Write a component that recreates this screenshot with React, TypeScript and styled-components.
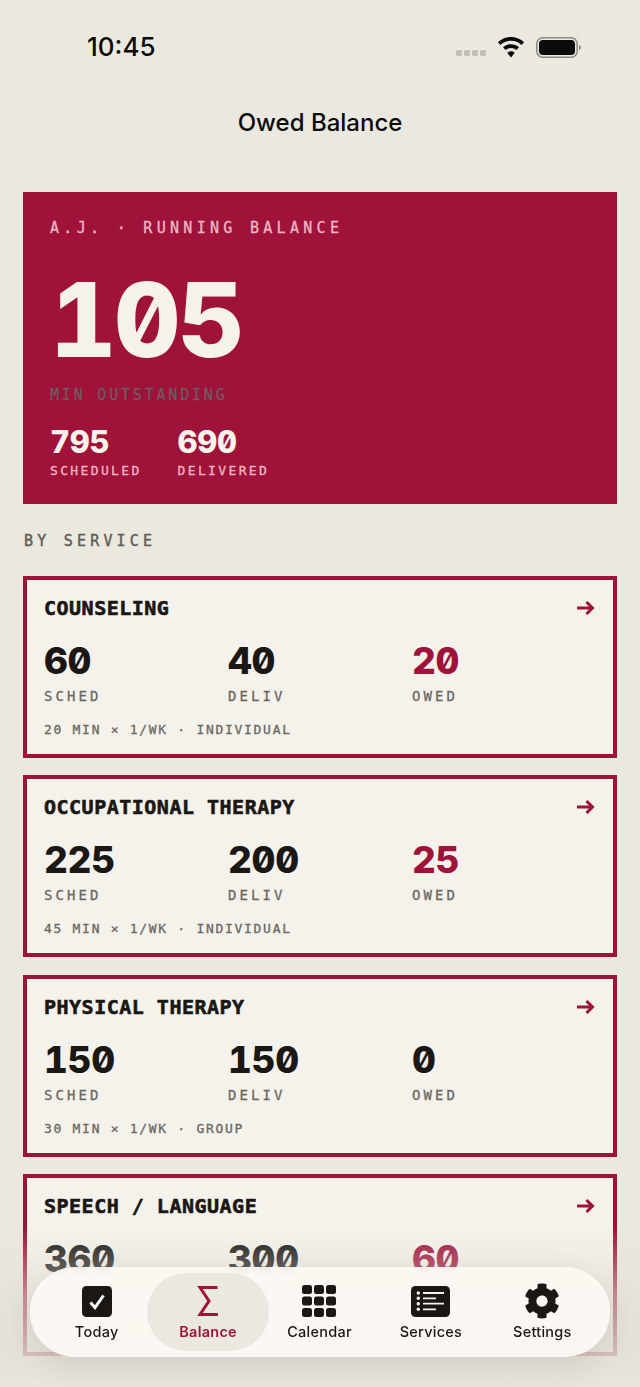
import React from "react";
import styled, { createGlobalStyle } from "styled-components";
import { FaCog } from "react-icons/fa";

const MONO = `"DejaVu Sans Mono", "Liberation Mono", monospace`;
const SANS = `Inter, "Noto Sans", sans-serif`;
const CRIMSON = "#9f1239";
const INK = "#1a1714";

const GlobalStyle = createGlobalStyle`
  html, body {
    margin: 0;
    padding: 0;
    background: #ebe8e0;
    height: 100%;
    overflow: hidden;
  }
  * { box-sizing: border-box; }
`;

const Screen = styled.div`
  position: relative;
  width: 640px;
  height: 1387px;
  overflow: hidden;
  background: #ebe8e0;
`;

const StatusBar = styled.div`
  height: 94px;
  padding: 32px 58px 0 87px;
  display: flex;
  justify-content: space-between;
  align-items: flex-start;
`;

const Clock = styled.div`
  font: 500 26px/30px ${SANS};
  color: #0b0b0b;
`;

const StatusIcons = styled.div`
  display: flex;
  align-items: center;
  gap: 11px;
  height: 30px;
`;

const SignalDots = styled.div`
  display: flex;
  gap: 2px;
  margin-top: 12px;
`;

const SignalDot = styled.span`
  width: 6px;
  height: 6px;
  border-radius: 1.5px;
  background: #c2c0ba;
`;

const Title = styled.h1`
  margin: 0;
  height: 98px;
  padding-top: 14px;
  text-align: center;
  font: 500 24px/29px ${SANS};
  color: #0b0b0b;
`;

const Content = styled.div`
  padding: 0 23px;
`;

const Hero = styled.section`
  height: 312px;
  background: ${CRIMSON};
  padding: 26px 27px 0;
  font-family: ${MONO};
`;

const HeroEyebrow = styled.div`
  font-size: 15px;
  line-height: 20px;
  letter-spacing: 4.3px;
  color: #f0b6c4;
  white-space: pre;
  -webkit-text-stroke: 0.3px;
`;

const Numeral = styled.div`
  font-family: ${SANS};
  font-weight: 800;
  font-feature-settings: "zero", "tnum";
`;

const HeroValue = styled(Numeral)`
  margin-top: 22px;
  font-size: 103px;
  line-height: 120px;
  letter-spacing: -2.5px;
  color: #f5f2ec;
`;

const HeroCaption = styled.div`
  margin-top: 5px;
  font-size: 15px;
  line-height: 20px;
  letter-spacing: 2.8px;
  color: #6f5a5d;
  -webkit-text-stroke: 0.3px;
`;

const HeroStats = styled.div`
  margin-top: 19px;
  display: flex;
  gap: 36px;
`;

const HeroStatValue = styled(Numeral)`
  font-size: 31px;
  line-height: 36px;
  letter-spacing: -0.3px;
  color: #f5f2ec;
`;

const HeroStatLabel = styled.div`
  margin-top: 2px;
  font-size: 13px;
  line-height: 18px;
  letter-spacing: 2.35px;
  color: #f0b6c4;
  -webkit-text-stroke: 0.3px;
`;

const SectionLabel = styled.div`
  margin: 27px 0 25px 1px;
  font: 15px/20px ${MONO};
  letter-spacing: 4.2px;
  color: #5f5c55;
  -webkit-text-stroke: 0.4px;
`;

const CardList = styled.div`
  display: flex;
  flex-direction: column;
  gap: 17.33px;
`;

const Card = styled.article`
  height: 182px;
  border: 4px solid ${CRIMSON};
  background: #f5f2ec;
  padding: 15px 18px 0 17px;
  font-family: ${MONO};
`;

const CardHead = styled.div`
  display: flex;
  justify-content: space-between;
  align-items: center;
  height: 26px;
`;

const CardName = styled.h2`
  margin: 0;
  font-size: 20px;
  line-height: 26px;
  font-weight: 700;
  letter-spacing: 0.5px;
  color: ${INK};
  white-space: pre;
  -webkit-text-stroke: 0.6px;
`;

const StatGrid = styled.div`
  margin-top: 18px;
  display: grid;
  grid-template-columns: repeat(3, 184px);
`;

const StatValue = styled(Numeral)<{ $accent?: boolean }>`
  font-size: 37px;
  line-height: 44px;
  letter-spacing: -0.3px;
  color: ${({ $accent }) => ($accent ? CRIMSON : INK)};
`;

const StatLabel = styled.div`
  margin-top: 4px;
  font-size: 14px;
  line-height: 18px;
  letter-spacing: 3.1px;
  color: #6b6860;
  -webkit-text-stroke: 0.3px;
`;

const CardMeta = styled.div`
  margin-top: 16px;
  font-size: 13px;
  line-height: 18px;
  letter-spacing: 1.7px;
  color: #6b6860;
  white-space: pre;
  -webkit-text-stroke: 0.3px;
`;

const BottomFade = styled.div`
  position: absolute;
  left: 0;
  right: 0;
  bottom: 0;
  height: 160px;
  background: linear-gradient(
    to bottom,
    rgba(235, 232, 224, 0) 0%,
    rgba(226, 223, 216, 0.55) 40%,
    rgba(226, 223, 216, 0.8) 75%,
    rgba(232, 229, 222, 0.95) 100%
  );
`;

const TabBar = styled.nav`
  position: absolute;
  left: 30px;
  top: 1267px;
  width: 580px;
  height: 90px;
  border-radius: 45px;
  background: rgba(252, 249, 243, 0.92);
  backdrop-filter: blur(3px);
  box-shadow: 0 8px 30px rgba(60, 50, 40, 0.12);
  display: grid;
  grid-template-columns: repeat(5, 1fr);
  padding: 6px 12px 6px 11px;
`;

const Tab = styled.div<{ $active?: boolean }>`
  display: flex;
  flex-direction: column;
  align-items: center;
  border-radius: 39px;
  padding-top: 12px;
  margin: 0 ${({ $active }) => ($active ? "-5.5px" : "0")};
  background: ${({ $active }) => ($active ? "#ebe8e1" : "transparent")};
  color: ${({ $active }) => ($active ? CRIMSON : INK)};
`;

const TabIcon = styled.div`
  height: 32px;
  display: flex;
  align-items: center;
  justify-content: center;
`;

const TabLabel = styled.span<{ $active?: boolean }>`
  margin-top: 6px;
  font: ${({ $active }) => ($active ? 600 : 500)} 14.5px/18px ${SANS};
  letter-spacing: 0.25px;
`;

const Wifi = () => (
  <svg width="28" height="21" viewBox="0 0 28 21" fill="#0b0b0b">
    <path d="M14 0C8.9 0 4.3 2 .9 5.2l2.5 2.7C6.2 5.300 9.900 3.700 14 3.700s7.800 1.600 10.600 4.200l2.500-2.700C23.700 2 19.100 0 14 0z" />
    <path d="M14 7.200c-3.100 0-5.900 1.200-8 3.100l2.600 2.700c1.400-1.300 3.300-2.100 5.400-2.100s4 .8 5.400 2.100l2.600-2.700c-2.100-1.900-4.900-3.100-8-3.100z" />
    <path d="M14 14.300c-1.500 0-2.800.6-3.800 1.500L14 20.500l3.800-4.700c-1-.9-2.300-1.500-3.800-1.500z" />
  </svg>
);

const Battery = () => (
  <svg width="46" height="21" viewBox="0 0 46 21">
    <rect x="0.8" y="0.8" width="40.4" height="19.400" rx="6" fill="none" stroke="#8a8985" strokeWidth="1.500" />
    <rect x="3" y="3" width="36" height="15" rx="4" fill="#0b0b0b" />
    <path d="M43 8c1.200.4 2 1.300 2 2.500s-.8 2.100-2 2.500z" fill="#8a8985" />
  </svg>
);

const TodayIcon = () => (
  <svg width="30" height="31" viewBox="0 0 30 31">
    <rect width="30" height="31" rx="4.500" fill={INK} />
    <path d="M8.500 16.500l4.500 5L21.500 9.500" fill="none" stroke="#fff" strokeWidth="3" />
  </svg>
);

const SigmaIcon = () => (
  <svg width="22" height="32" viewBox="0 0 22 32">
    <path d="M20.500 2.500H3l9 13.500L3 29.500h18" fill="none" stroke={CRIMSON} strokeWidth="3" />
  </svg>
);

const GridIcon = () => (
  <svg width="34" height="32" viewBox="0 0 34 32" fill={INK}>
    {[0, 11.500, 23].map((y) =>
      [0, 12, 24].map((x) => <rect key={`${x}-${y}`} x={x} y={y} width="10" height="9" rx="2.500" />)
    )}
  </svg>
);

const ServicesIcon = () => (
  <svg width="39" height="31" viewBox="0 0 39 31">
    <rect width="39" height="31" rx="4.500" fill={INK} />
    <g stroke="#f5f2ec" strokeWidth="1.800">
      <path d="M12 7h21M12 12.300h13M12 17.700h21M12 23.300h13" />
    </g>
    <g fill="#f5f2ec">
      <circle cx="7.300" cy="7" r="1.700" />
      <circle cx="7.300" cy="12.300" r="1.700" />
      <circle cx="7.300" cy="17.700" r="1.700" />
      <circle cx="7.300" cy="23.300" r="1.700" />
    </g>
  </svg>
);

const ArrowIcon = () => (
  <svg width="18" height="16" viewBox="0 0 18 16">
    <path d="M0 8h15.500M9.500 2L15.500 8l-6 6" fill="none" stroke={CRIMSON} strokeWidth="3" />
  </svg>
);

type Service = {
  name: string;
  sched: number;
  deliv: number;
  owed: number;
  meta: string;
};

const services: Service[] = [
  { name: "COUNSELING", sched: 60, deliv: 40, owed: 20, meta: "20 MIN × 1/WK · INDIVIDUAL" },
  { name: "OCCUPATIONAL THERAPY", sched: 225, deliv: 200, owed: 25, meta: "45 MIN × 1/WK · INDIVIDUAL" },
  { name: "PHYSICAL THERAPY", sched: 150, deliv: 150, owed: 0, meta: "30 MIN × 1/WK · GROUP" },
  { name: "SPEECH / LANGUAGE", sched: 360, deliv: 300, owed: 60, meta: "60 MIN × 1/WK · INDIVIDUAL" },
];

const tabs = [
  { label: "Today", icon: <TodayIcon /> },
  { label: "Balance", icon: <SigmaIcon />, active: true },
  { label: "Calendar", icon: <GridIcon /> },
  { label: "Services", icon: <ServicesIcon /> },
  { label: "Settings", icon: <FaCog size={36} /> },
];

const App = () => (
  <Screen>
    <GlobalStyle />
    <StatusBar>
      <Clock>10:45</Clock>
      <StatusIcons>
        <SignalDots>
          {[0, 1, 2, 3].map((d) => (
            <SignalDot key={d} />
          ))}
        </SignalDots>
        <Wifi />
        <Battery />
      </StatusIcons>
    </StatusBar>
    <Title>Owed Balance</Title>
    <Content>
      <Hero>
        <HeroEyebrow>A.J. · RUNNING BALANCE</HeroEyebrow>
        <HeroValue>105</HeroValue>
        <HeroCaption>MIN OUTSTANDING</HeroCaption>
        <HeroStats>
          <div>
            <HeroStatValue>795</HeroStatValue>
            <HeroStatLabel>SCHEDULED</HeroStatLabel>
          </div>
          <div>
            <HeroStatValue>690</HeroStatValue>
            <HeroStatLabel>DELIVERED</HeroStatLabel>
          </div>
        </HeroStats>
      </Hero>
      <SectionLabel>BY SERVICE</SectionLabel>
      <CardList>
        {services.map((s) => (
          <Card key={s.name}>
            <CardHead>
              <CardName>{s.name}</CardName>
              <ArrowIcon />
            </CardHead>
            <StatGrid>
              <div>
                <StatValue>{s.sched}</StatValue>
                <StatLabel>SCHED</StatLabel>
              </div>
              <div>
                <StatValue>{s.deliv}</StatValue>
                <StatLabel>DELIV</StatLabel>
              </div>
              <div>
                <StatValue $accent={s.owed > 0}>{s.owed}</StatValue>
                <StatLabel>OWED</StatLabel>
              </div>
            </StatGrid>
            <CardMeta>{s.meta}</CardMeta>
          </Card>
        ))}
      </CardList>
    </Content>
    <BottomFade />
    <TabBar>
      {tabs.map((t) => (
        <Tab key={t.label} $active={t.active}>
          <TabIcon>{t.icon}</TabIcon>
          <TabLabel $active={t.active}>{t.label}</TabLabel>
        </Tab>
      ))}
    </TabBar>
  </Screen>
);

export default App;
